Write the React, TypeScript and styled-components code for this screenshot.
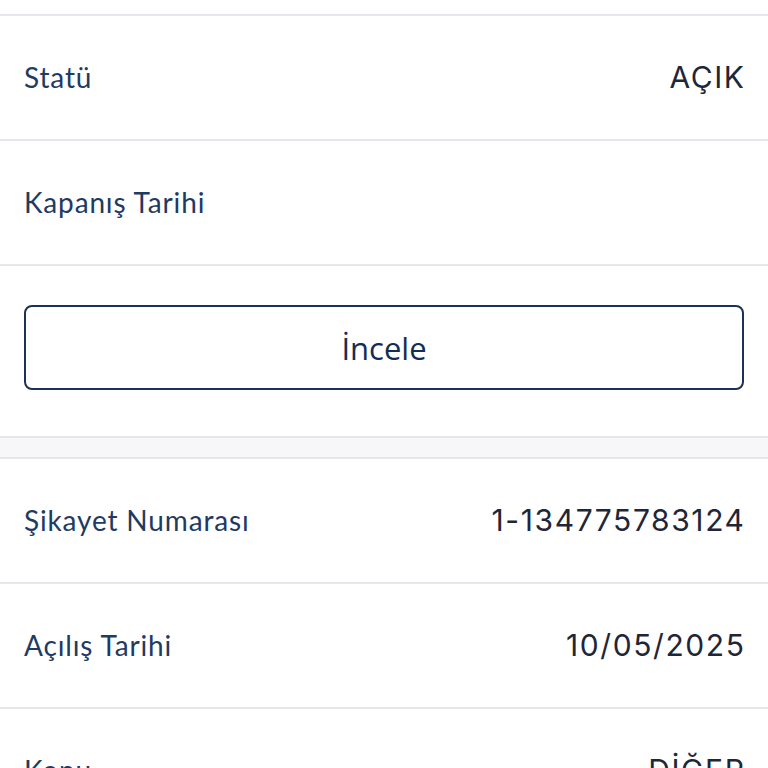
import React from "react";
import styled, { createGlobalStyle } from "styled-components";

const GlobalStyle = createGlobalStyle`
  html, body {
    margin: 0;
    padding: 0;
    background: #ffffff;
    overflow: hidden;
  }
`;

const Page = styled.div`
  width: 768px;
  height: 768px;
  overflow: hidden;
  background: #ffffff;
  display: flex;
  flex-direction: column;
`;

const Card = styled.section<{ $offset?: number }>`
  display: flex;
  flex-direction: column;
  margin-top: ${(p) => p.$offset ?? 0}px;
  flex-shrink: 0;
`;

const Row = styled.div<{ $first?: boolean }>`
  height: 123px;
  padding: 0 24px;
  display: flex;
  align-items: center;
  justify-content: space-between;
  border-top: ${(p) => (p.$first ? "none" : "2px solid #e6e6ec")};
  flex-shrink: 0;
`;

const Label = styled.span`
  font-family: "Lato", "Open Sans", sans-serif;
  font-size: 28px;
  font-weight: 400;
  letter-spacing: 0.85px;
  color: #1f3a63;
  margin-top: -2px;
`;

const Value = styled.span`
  font-family: "Inter", "Open Sans", sans-serif;
  font-size: 30px;
  font-weight: 400;
  letter-spacing: 1.6px;
  margin-right: -1.6px;
  color: #1e2637;
  margin-top: -2px;
`;

const ActionArea = styled.div`
  border-top: 2px solid #e6e6ec;
  padding: 39px 24px 46px;
  flex-shrink: 0;
`;

const OutlineButton = styled.button`
  width: 100%;
  height: 85px;
  box-sizing: border-box;
  border: 2px solid #1b3157;
  border-radius: 8px;
  background: #ffffff;
  font-family: "Open Sans", "Noto Sans", sans-serif;
  font-size: 31px;
  color: #142d55;
  cursor: pointer;
`;

const Divider = styled.div`
  height: 19px;
  background: #f7f7f9;
  border-top: 2px solid #e6e6ec;
  border-bottom: 2px solid #e6e6ec;
  flex-shrink: 0;
`;

const topRows = [
  { label: "Statü", value: "AÇIK" },
  { label: "Kapanış Tarihi", value: "" },
];

const bottomRows = [
  { label: "Şikayet Numarası", value: "1-134775783124" },
  { label: "Açılış Tarihi", value: "10/05/2025" },
  { label: "Konu", value: "DİĞER" },
];

export default function App() {
  return (
    <>
      <GlobalStyle />
      <Page>
        <Card $offset={-111}>
          <Row />
          {topRows.map((r) => (
            <Row key={r.label}>
              <Label>{r.label}</Label>
              <Value>{r.value}</Value>
            </Row>
          ))}
          <ActionArea>
            <OutlineButton>İncele</OutlineButton>
          </ActionArea>
        </Card>
        <Divider />
        <Card>
          {bottomRows.map((r, i) => (
            <Row key={r.label} $first={i === 0}>
              <Label>{r.label}</Label>
              <Value>{r.value}</Value>
            </Row>
          ))}
        </Card>
      </Page>
    </>
  );
}
